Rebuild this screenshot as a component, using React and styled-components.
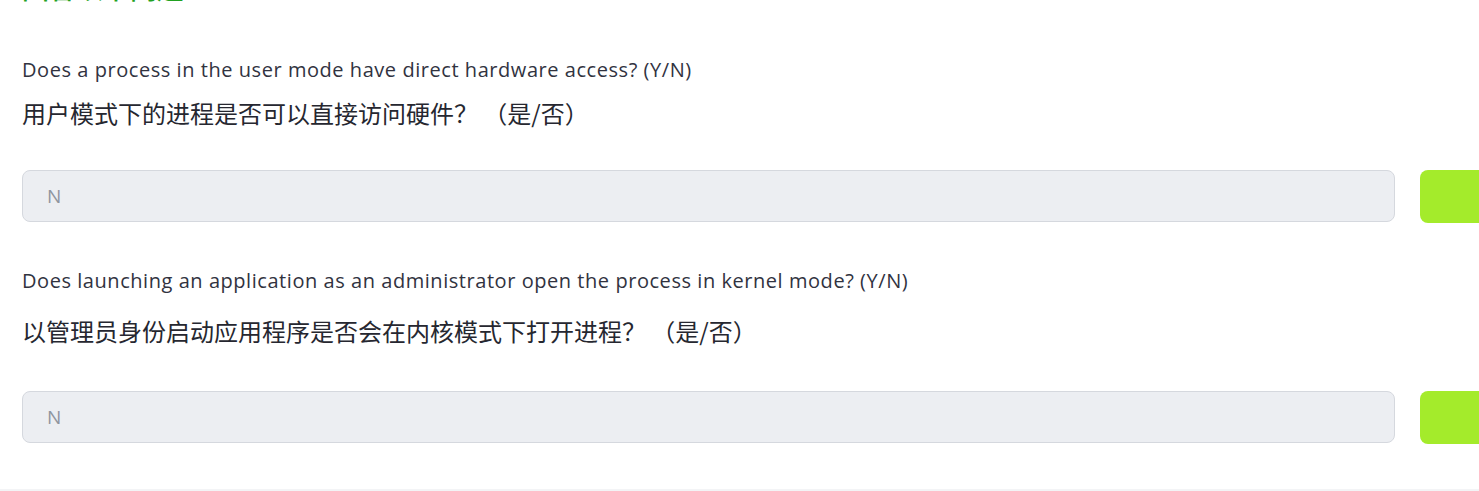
import React from 'react';
import styled, { createGlobalStyle } from 'styled-components';

const GlobalStyle = createGlobalStyle`
  html, body {
    margin: 0;
    padding: 0;
    background: #ffffff;
    overflow: hidden;
  }
  body {
    font-family: "Noto Sans", "Noto Sans CJK SC", sans-serif;
    color: #31333f;
  }
`;

const Page = styled.div`
  width: 1479px;
  height: 491px;
  display: flex;
  flex-direction: column;
  overflow: hidden;
`;

const Content = styled.div`
  flex: 1;
  padding-left: 22px;
`;

const Heading = styled.h2`
  margin: -27px 0 0 0;
  height: 30px;
  font-family: "Noto Sans CJK SC", sans-serif;
  font-size: 27px;
  line-height: 30px;
  font-weight: 500;
  color: #21a121;
`;

const Question = styled.div`
  margin-top: ${(p) => p.top}px;
  display: flex;
  flex-direction: column;
`;

const EnLine = styled.div`
  height: 30px;
  line-height: 30px;
  font-size: 20px;
  font-family: "Open Sans", "Noto Sans", sans-serif;
  letter-spacing: 0.55px;
  color: #31333f;
`;

const ZhLine = styled.div`
  margin-top: ${(p) => p.gap}px;
  height: 30px;
  line-height: 30px;
  font-size: 24px;
  font-family: "Noto Sans CJK SC", sans-serif;
  color: #262730;
`;

const InputRow = styled.div`
  margin-top: ${(p) => p.gap}px;
  display: grid;
  grid-template-columns: 1373px 100px;
  column-gap: 25px;
  align-items: start;
`;

const AnswerBox = styled.div`
  height: 52px;
  box-sizing: border-box;
  border: 1px solid #d5d8de;
  border-radius: 8px;
  background: #eceef2;
  display: flex;
  align-items: center;
  padding-left: 24px;
  font-family: "Open Sans", "Noto Sans", sans-serif;
  font-size: 19px;
  color: #8f959f;
`;

const SubmitButton = styled.button`
  height: 53px;
  border: none;
  border-radius: 8px;
  background: #a4eb2b;
  padding: 0;
  cursor: pointer;
`;

const BottomBand = styled.div`
  height: 2px;
  background: #f3f4f6;
`;

const questions = [
  {
    en: 'Does a process in the user mode have direct hardware access? (Y/N)',
    zh: '用户模式下的进程是否可以直接访问硬件？ （是/否）',
    top: 52,
    zhGap: 13,
    inputGap: 42,
  },
  {
    en: 'Does launching an application as an administrator open the process in kernel mode? (Y/N)',
    zh: '以管理员身份启动应用程序是否会在内核模式下打开进程？ （是/否）',
    top: 43,
    zhGap: 20,
    inputGap: 45,
  },
];

const App = () => {
  return (
    <>
      <GlobalStyle />
      <Page>
        <Content>
          <Heading>回答以下问题</Heading>
          {questions.map((q, i) => (
            <Question key={i} top={q.top}>
              <EnLine>{q.en}</EnLine>
              <ZhLine gap={q.zhGap}>{q.zh}</ZhLine>
              <InputRow gap={q.inputGap}>
                <AnswerBox>N</AnswerBox>
                <SubmitButton aria-label="submit" />
              </InputRow>
            </Question>
          ))}
        </Content>
        <BottomBand />
      </Page>
    </>
  );
};

export default App;
